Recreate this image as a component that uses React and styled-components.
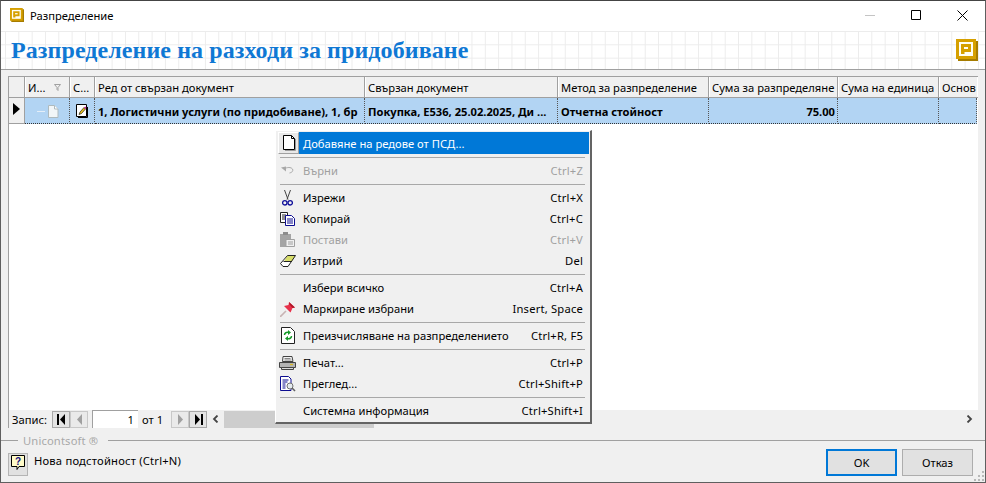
import React from "react";
import styled, { createGlobalStyle } from "styled-components";

const GlobalStyle = createGlobalStyle`
  html, body { margin: 0; padding: 0; background: #f0f0f0; }
  body { font-family: "Noto Sans", "Open Sans", sans-serif; font-size: 11.2px; color: #000; }
  * { box-sizing: border-box; }
`;

const columns = [
  { title: "И...", width: 45, filter: true },
  { title: "С...", width: 25 },
  { title: "Ред от свързан документ", width: 270 },
  { title: "Свързан документ", width: 193 },
  { title: "Метод за разпределение", width: 151 },
  { title: "Сума за разпределяне", width: 129 },
  { title: "Сума на единица", width: 101 },
  { title: "Основ", width: 38 },
];

const menuGroups = [
  [{ label: "Добавяне на редове от ПСД...", icon: "page", active: true }],
  [{ label: "Върни", shortcut: "Ctrl+Z", icon: "undo", disabled: true }],
  [
    { label: "Изрежи", shortcut: "Ctrl+X", icon: "cut" },
    { label: "Копирай", shortcut: "Ctrl+C", icon: "copy" },
    { label: "Постави", shortcut: "Ctrl+V", icon: "paste", disabled: true },
    { label: "Изтрий", shortcut: "Del", icon: "erase" },
  ],
  [
    { label: "Избери всичко", shortcut: "Ctrl+A" },
    { label: "Маркиране избрани", shortcut: "Insert, Space", icon: "pin" },
  ],
  [{ label: "Преизчисляване на разпределението", shortcut: "Ctrl+R, F5", icon: "recalc" }],
  [
    { label: "Печат...", shortcut: "Ctrl+P", icon: "print" },
    { label: "Преглед...", shortcut: "Ctrl+Shift+P", icon: "preview" },
  ],
  [{ label: "Системна информация", shortcut: "Ctrl+Shift+I" }],
];

function AppLogo({ size = 14 }) {
  return (
    <svg width={size} height={size} viewBox="0 0 22 22">
      <path d="M2 2h20v20H2z" fill="#a67c00" />
      <path d="M0 0h20v20H0z" fill="#d6a000" />
      <path d="M3 3h14v14H3z" fill="#fffef4" />
      <path d="M5 5h10v8H8.500v2H5z" fill="#d6a000" />
      <path d="M8 8h4v2H8z" fill="#fffef4" />
    </svg>
  );
}

function MenuIcon({ name }) {
  switch (name) {
    case "page":
      return (
        <svg width="14" height="16" viewBox="0 0 14 16">
          <path d="M1.500.5h8l3 3v11h-11z" fill="#fff" stroke="#000" />
          <path d="M9.500.5v3h3" fill="none" stroke="#000" />
          <path d="M13.500 4v11.500H3" fill="none" stroke="#9a9a9a" />
        </svg>
      );
    case "undo":
      return (
        <svg width="13" height="9" viewBox="0 0 13 9">
          <path d="M0 1.500l5-1v5z" fill="#a8a8a8" />
          <path d="M3 3c3-2 7-2 8.500 0 1 2.500-1 3.500-3 4" fill="none" stroke="#a8a8a8" />
        </svg>
      );
    case "cut":
      return (
        <svg width="11" height="16" viewBox="0 0 11 16">
          <path d="M2.500 0l3.500 9.500M8.500 0L5 9.500" stroke="#444" fill="none" />
          <circle cx="2.800" cy="12.800" r="2.200" fill="none" stroke="#10109a" strokeWidth="1.300" />
          <circle cx="8.200" cy="12.800" r="2.200" fill="none" stroke="#10109a" strokeWidth="1.300" />
        </svg>
      );
    case "copy":
      return (
        <svg width="15" height="14" viewBox="0 0 15 14">
          <path d="M.5.500h7v10h-7z" fill="#fff" stroke="#222" />
          <path d="M2 3h4M2 5h3M2 7h3" stroke="#222" />
          <path d="M5.500 3.500h6l3 3v7h-9z" fill="#fff" stroke="#0c0c90" />
          <path d="M7 7h6M7 9h6M7 11h6" stroke="#0c0c90" />
        </svg>
      );
    case "paste":
      return (
        <svg width="15" height="15" viewBox="0 0 15 15">
          <path d="M0 2h11v13H0z" fill="#a4a4a4" />
          <path d="M3 0h5v3H3z" fill="#8c8c8c" />
          <path d="M6 7.500h8.500V14.500H6z" fill="#f0f0f0" stroke="#a0a0a0" />
          <path d="M8 10h5M8 12h5" stroke="#a0a0a0" />
        </svg>
      );
    case "erase":
      return (
        <svg width="16" height="12" viewBox="0 0 16 12">
          <path d="M.5 8.500L7.500.5h8L12 6.500 7.500 11.500H3z" fill="#fff" />
          <path d="M7.500.500h8L12 6.500H4z" fill="#d8de6a" />
          <path d="M.5 8.500L7.500.5h8L8 11.500H3zM3.500 6.500H12" fill="none" stroke="#222" />
        </svg>
      );
    case "pin":
      return (
        <svg width="16" height="16" viewBox="0 0 16 16">
          <path d="M0 16l6-6" stroke="#c8b4b4" strokeWidth="1.600" />
          <path d="M9 1l6 5.500-2.500.5-2 4.500-6.500-6.500L8.500 4z" fill="#e8304a" />
          <path d="M9 1l6 5.500-2.500.5L9.500 3.500z" fill="#b01828" />
        </svg>
      );
    case "recalc":
      return (
        <svg width="14" height="17" viewBox="0 0 14 17">
          <path d="M.5.500h9l4 4v12H.5z" fill="#fff" stroke="#222" />
          <path d="M3.500 8c0-2 2-3.200 4-2.500" fill="none" stroke="#169a28" strokeWidth="1.500" />
          <path d="M7 3l3 2.500L7 8z" fill="#169a28" />
          <path d="M10.500 9c0 2-2 3.200-4 2.500" fill="none" stroke="#169a28" strokeWidth="1.500" />
          <path d="M7 14l-3-2.500L7 9z" fill="#169a28" />
        </svg>
      );
    case "print":
      return (
        <svg width="17" height="14" viewBox="0 0 17 14">
          <path d="M4 .5h9l1 5H3.500z" fill="#f4f4f4" stroke="#444" />
          <path d="M5.500 2.500h6M5.500 4h7" stroke="#888" />
          <path d="M.5 6.500h16v5H.5z" fill="#b4b4b4" stroke="#444" />
          <path d="M2.500 11.500h12v2h-12z" fill="#dcdcdc" stroke="#444" />
          <path d="M11 8.500h3" stroke="#d8b820" strokeWidth="1.200" />
        </svg>
      );
    case "preview":
      return (
        <svg width="16" height="16" viewBox="0 0 16 16">
          <path d="M.5.500h8l2.500 2.500v11.500H.5z" fill="#fff" stroke="#0c0c90" />
          <path d="M2.500 4h6M2.500 6h5M2.500 8h3M2.500 10h3M2.500 12h3" stroke="#0c0c90" />
          <circle cx="10" cy="10" r="3" fill="#e4eaee" stroke="#707070" />
          <path d="M12 12l3 3" stroke="#606060" strokeWidth="1.600" />
        </svg>
      );
    default:
      return null;
  }
}

function NavGlyph({ dir, stop, off }) {
  const fill = off ? "#a0a0a0" : "#000";
  const left = dir === "left";
  return (
    <svg width="11" height="11" viewBox="0 0 11 11">
      {left ? (
        <path d={stop ? "M9 0v11L4 5.500z" : "M8 0v11L3 5.500z"} fill={fill} />
      ) : (
        <path d={stop ? "M2 0v11l5-5.500z" : "M3 0v11l5-5.500z"} fill={fill} />
      )}
      {stop && <path d={left ? "M1 0h2v11H1z" : "M8 0h2v11H8z"} fill={fill} />}
    </svg>
  );
}

export default function App() {
  return (
    <Page>
      <GlobalStyle />
      <Window>
        <TitleBar>
          <AppLogo />
          <TitleText>Разпределение</TitleText>
          <WinButtons>
            <WinButton>
              <svg width="10" height="10" viewBox="0 0 10 10"><path d="M0 5.500h10" stroke="#c4c4c4" /></svg>
            </WinButton>
            <WinButton>
              <svg width="10" height="10" viewBox="0 0 10 10"><path d="M.5.500h9v9h-9z" fill="none" stroke="#000" /></svg>
            </WinButton>
            <WinButton>
              <svg width="11" height="11" viewBox="0 0 11 11"><path d="M.5.500l10 10M10.500.500l-10 10" stroke="#000" /></svg>
            </WinButton>
          </WinButtons>
        </TitleBar>

        <Banner>
          <BannerTitle>Разпределение на разходи за придобиване</BannerTitle>
          <AppLogo size={22} />
        </Banner>

        <Content>
          <Grid>
            <HeaderRow>
              <Indicator />
              {columns.map((c) => (
                <HeaderCell key={c.title} $width={c.width}>
                  <span>{c.title}</span>
                  {c.filter && (
                    <svg width="7" height="7" viewBox="0 0 7 7"><path d="M.5.500h6L4 3.500v3L3 5.500v-2z" fill="none" stroke="#a0a0a0" /></svg>
                  )}
                </HeaderCell>
              ))}
            </HeaderRow>

            <DataRow>
              <Indicator $row>
                <svg width="7" height="12" viewBox="0 0 7 12"><path d="M0 0l7 6-7 6z" fill="#000" /></svg>
              </Indicator>
              <DataCell $width={45} $center>
                <TreeDash />
                <svg width="11" height="13" viewBox="0 0 11 13">
                  <path d="M.5.500h6l3.500 3.500v8.500H.5z" fill="#f2f6f8" stroke="#aebabe" />
                  <path d="M6.500.500V4H10" fill="#fff" stroke="#aebabe" />
                </svg>
              </DataCell>
              <DataCell $width={25} $center>
                <svg width="13" height="14" viewBox="0 0 13 14">
                  <path d="M.5.500h10v12H.5z" fill="#fff" stroke="#000" />
                  <path d="M11.500 3v10.500H2" fill="none" stroke="#000" />
                  <path d="M3 10.500l1-2.500 4-4.500 1.500 1.500-4 4.500z" fill="#e8c020" stroke="#000" strokeWidth=".6" />
                  <path d="M8 3.500l1.500 1.500 1-1.200-1.300-1.300z" fill="#c02090" />
                </svg>
              </DataCell>
              <DataCell $width={270}>1, Логистични услуги (по придобиване), 1, бр</DataCell>
              <DataCell $width={193}>Покупка, E536, 25.02.2025, Ди ...</DataCell>
              <DataCell $width={151}>Отчетна стойност</DataCell>
              <DataCell $width={129} $right>75.00</DataCell>
              <DataCell $width={101} />
              <DataCell $width={38} />
            </DataRow>

            <GridBody />

            <NavBar>
              <NavLabel>Запис:</NavLabel>
              <NavButton><NavGlyph dir="left" stop /></NavButton>
              <NavButton $off><NavGlyph dir="left" off /></NavButton>
              <RecordInput>1</RecordInput>
              <OfLabel>от 1</OfLabel>
              <NavButton $off><NavGlyph dir="right" off /></NavButton>
              <NavButton><NavGlyph dir="right" stop /></NavButton>
              <ScrollArrow>
                <svg width="7" height="8" viewBox="0 0 7 8"><path d="M5.500.500L2 4l3.500 3.500" fill="none" stroke="#444" strokeWidth="1.800" /></svg>
              </ScrollArrow>
              <ScrollThumb />
              <ScrollTrack />
              <ScrollArrow>
                <svg width="7" height="8" viewBox="0 0 7 8"><path d="M1.500.500L5 4 1.500 7.500" fill="none" stroke="#444" strokeWidth="1.800" /></svg>
              </ScrollArrow>
            </NavBar>
          </Grid>

          <BrandLine>
            <BrandText>Unicontsoft ®</BrandText>
          </BrandLine>

          <Footer>
            <HelpButton>
              <svg width="14" height="15" viewBox="0 0 14 15">
                <path d="M.5.500h13v11H8l-2 3v-3H.5z" fill="#fffbc8" stroke="#000" />
                <text x="7" y="9.500" fontSize="10" fontWeight="700" textAnchor="middle" fill="#101080" fontFamily="Liberation Sans, sans-serif">?</text>
              </svg>
            </HelpButton>
            <HelpText>Нова подстойност (Ctrl+N)</HelpText>
            <FooterButton $primary>OK</FooterButton>
            <FooterButton>Отказ</FooterButton>
          </Footer>
        </Content>

        <Menu>
          {menuGroups.map((group, i) => (
            <React.Fragment key={i}>
              {i > 0 && <MenuSeparator />}
              {group.map((item) => (
                <MenuItem key={item.label} $disabled={item.disabled} $active={item.active}>
                  <IconSlot $active={item.active}>{item.icon && <MenuIcon name={item.icon} />}</IconSlot>
                  <MenuBody $active={item.active}>
                    <span>{item.label}</span>
                    {item.shortcut && <Shortcut>{item.shortcut}</Shortcut>}
                  </MenuBody>
                </MenuItem>
              ))}
            </React.Fragment>
          ))}
        </Menu>

        <ResizeGrip>
          <svg width="10" height="10" viewBox="0 0 10 10">
            <path d="M8 0h2v2H8zM4 4h2v2H4zM8 4h2v2H8zM0 8h2v2H0zM4 8h2v2H4zM8 8h2v2H8z" fill="#b8b8b8" />
          </svg>
        </ResizeGrip>
      </Window>
    </Page>
  );
}

const Page = styled.div`
  width: 986px;
  height: 483px;
  overflow: hidden;
`;

const Window = styled.div`
  position: relative;
  width: 986px;
  height: 483px;
  display: flex;
  flex-direction: column;
  background: #f0f0f0;
  border: 1px solid #5f5f5f;
  border-top-color: #444;
`;

const TitleBar = styled.div`
  height: 30px;
  flex: none;
  display: flex;
  align-items: center;
  padding: 0 0 2px 9px;
  background: #fff;
`;

const TitleText = styled.span`
  margin-left: 6px;
`;

const WinButtons = styled.div`
  margin-left: auto;
  display: flex;
`;

const WinButton = styled.div`
  width: 46px;
  height: 28px;
  display: flex;
  align-items: center;
  justify-content: center;
`;

const Banner = styled.div`
  height: 39px;
  flex: none;
  display: flex;
  align-items: center;
  justify-content: space-between;
  padding: 0 7px 0 10px;
  border-bottom: 1px solid #a0a0a0;
  background-color: #fff;
  background-image:
    linear-gradient(#ececec 1px, transparent 1px),
    linear-gradient(90deg, #ececec 1px, transparent 1px);
  background-size: 13.33px 13.33px;
  background-position: 4px 0;
`;

const BannerTitle = styled.div`
  font-family: "Liberation Serif", serif;
  font-weight: 700;
  font-size: 24px;
  letter-spacing: 0.08px;
  color: #0f78d4;
`;

const Content = styled.div`
  flex: 1;
  min-height: 0;
  display: flex;
  flex-direction: column;
`;

const Grid = styled.div`
  height: 352px;
  flex: none;
  margin: 6px 7px 0 7px;
  display: flex;
  flex-direction: column;
  background: #fff;
  border-top: 1px solid #a0a0a0;
  border-left: 1px solid #a0a0a0;
  overflow: hidden;
`;

const HeaderRow = styled.div`
  display: flex;
  height: 21px;
  flex: none;
  border-bottom: 1px solid #a0a0a0;
`;

const Indicator = styled.div`
  width: 16px;
  flex: none;
  display: flex;
  align-items: center;
  justify-content: center;
  background: #f0f0f0;
  border-right: 1px solid #a0a0a0;
  ${(p) => p.$row && "padding-bottom: 4px; border-bottom: 1px solid #a0a0a0;"}
`;

const HeaderCell = styled.div`
  width: ${(p) => p.$width}px;
  flex: none;
  display: flex;
  align-items: center;
  justify-content: space-between;
  padding: 0 8px 0 2px;
  overflow: hidden;
  white-space: nowrap;
  background: #f0f0f0;
  border-right: 1px solid #a0a0a0;
  border-left: 1px solid #fff;
  &:last-child { padding-right: 0; border-right: 0; }
`;

const DataRow = styled.div`
  display: flex;
  height: 26px;
  flex: none;
`;

const DataCell = styled.div`
  width: ${(p) => p.$width}px;
  flex: none;
  display: flex;
  align-items: center;
  justify-content: ${(p) => (p.$center ? "center" : p.$right ? "flex-end" : "flex-start")};
  padding: 1px 2px 0 3px;
  white-space: nowrap;
  overflow: hidden;
  font-size: 11.15px;
  font-weight: 700;
  background: #b2d4f3;
  border-right: 1px dotted #555;
  border-bottom: 1px dotted #333;
`;

const TreeDash = styled.span`
  width: 8px;
  height: 1px;
  margin-right: 3px;
  background: #e4eef8;
`;

const GridBody = styled.div`
  flex: 1;
  background: #fff;
`;

const NavBar = styled.div`
  height: 19px;
  flex: none;
  display: flex;
  align-items: center;
  padding-left: 3px;
  background: #f0f0f0;
  border-top: 1px solid #fff;
`;

const NavLabel = styled.span`
  width: 40px;
  flex: none;
`;

const NavButton = styled.div`
  width: 18px;
  height: 17px;
  flex: none;
  display: flex;
  align-items: center;
  justify-content: center;
  background: #e4e4e4;
  border: 1px solid #a8a8a8;
  ${(p) => p.$off && "background: #eaeaea; border-color: #c8c8c8;"}
`;

const RecordInput = styled.div`
  width: 46px;
  height: 18px;
  flex: none;
  margin-left: 4px;
  padding-right: 4px;
  text-align: right;
  line-height: 18px;
  background: #fff;
  border-left: 1px solid #a0a0a0;
  border-top: 1px solid #a0a0a0;
`;

const OfLabel = styled.span`
  width: 33px;
  flex: none;
  padding-left: 4px;
`;

const ScrollArrow = styled.div`
  width: 17px;
  flex: none;
  display: flex;
  align-items: center;
  justify-content: center;
`;

const ScrollThumb = styled.div`
  width: 150px;
  height: 17px;
  flex: none;
  background: #cdcdcd;
`;

const ScrollTrack = styled.div`
  flex: 1;
`;

const BrandLine = styled.div`
  height: 16px;
  margin-top: 4px;
  flex: none;
  display: flex;
  align-items: center;
  &::before { content: ""; width: 17px; height: 1px; background: #a0a0a0; margin-right: 5px; }
  &::after { content: ""; flex: 1; height: 1px; background: #a0a0a0; margin-left: 10px; }
`;

const BrandText = styled.span`
  color: #a8a8a8;
  letter-spacing: 0.15px;
`;

const Footer = styled.div`
  flex: 1;
  display: flex;
  align-items: flex-start;
  padding: 1px 12px 0 7px;
`;

const HelpButton = styled.div`
  width: 20px;
  height: 23px;
  margin-top: 4px;
  padding-top: 1px;
  display: flex;
  align-items: flex-start;
  justify-content: center;
  background: #e1e1e1;
  border: 1px solid #b4b4b4;
`;

const HelpText = styled.span`
  margin: 4px 0 0 6px;
  line-height: 16px;
  letter-spacing: 0.2px;
  flex: 1;
`;

const FooterButton = styled.div`
  width: 71px;
  height: 27px;
  margin-left: 5px;
  display: flex;
  align-items: center;
  justify-content: center;
  background: #e1e1e1;
  border: ${(p) => (p.$primary ? "2px solid #0078d7" : "1px solid #adadad")};
`;

const ResizeGrip = styled.div`
  position: absolute;
  right: 1px;
  bottom: 1px;
  line-height: 0;
`;

const Menu = styled.div`
  position: absolute;
  z-index: 2;
  left: 274px;
  top: 129px;
  width: 317px;
  height: 294px;
  padding: 1px 1px 0 2px;
  background: #f0f0f0;
  border: 1px solid #fff;
  border-right: 2px solid #646464;
  border-bottom: 2px solid #646464;
`;

const MenuSeparator = styled.div`
  height: 1px;
  margin: 3px 4px 2px 2px;
  background: #a8a8a8;
`;

const MenuItem = styled.div`
  display: flex;
  height: ${(p) => (p.$active ? 22 : 21)}px;
  align-items: stretch;
  color: ${(p) => (p.$disabled ? "#a0a0a0" : "#000")};
`;

const IconSlot = styled.div`
  width: 21px;
  flex: none;
  display: flex;
  align-items: center;
  justify-content: center;
  padding-right: 2px;
  ${(p) => p.$active && "padding-right: 0; background: #e8e8e8; border: 1px solid #fff; border-right-color: #a0a0a0; border-bottom-color: #a0a0a0;"}
`;

const MenuBody = styled.div`
  flex: 1;
  display: flex;
  align-items: center;
  justify-content: space-between;
  padding: 0 6px 0 4px;
  ${(p) => p.$active && "background: #0078d7; color: #fff;"}
`;

const Shortcut = styled.span`
  letter-spacing: 0.2px;
`;
